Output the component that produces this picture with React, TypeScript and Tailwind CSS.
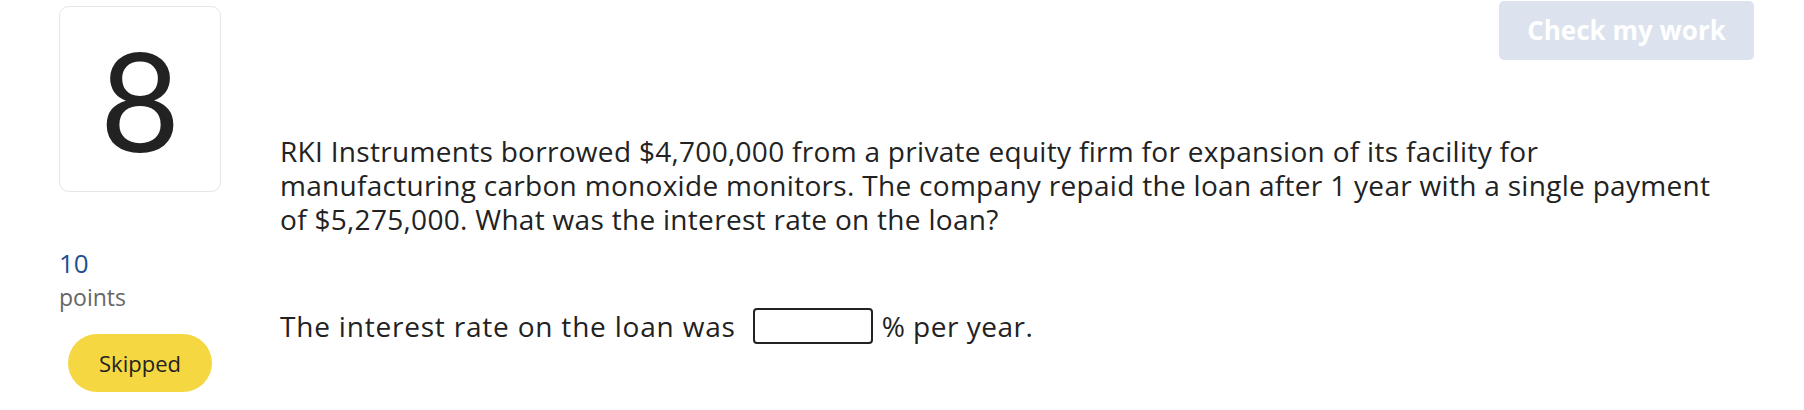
import React from "react";

export default function App() {
  return (
    <div className="w-[1804px] h-[410px] bg-white flex overflow-hidden" style={{ fontFamily: "'Open Sans', Lato, sans-serif" }}>
      <div className="w-[280px] shrink-0 pl-[59px] pt-[6px] flex flex-col">
        <div className="w-[162px] h-[186px] rounded-[10px] border border-[#e6e6e6] flex items-center justify-center">
          <span className="text-[138px] leading-none text-[#222] font-normal" style={{ fontFamily: "Lato, sans-serif" }}>8</span>
        </div>
        <div className="mt-[56px] text-[26px] leading-[30px] text-[#1f4f8f]">10</div>
        <div className="mt-[5px] text-[23px] leading-[28px] text-[#666]">points</div>
        <div className="mt-[23px] ml-[9px] w-[144px] h-[58px] rounded-full bg-[#f5d742] flex items-center justify-center text-[22px] text-[#222]">
          Skipped
        </div>
      </div>
      <div className="flex-1 pt-[1px] flex flex-col">
        <div className="flex justify-end pr-[50px]">
          <button className="w-[255px] h-[59px] rounded-[5px] bg-[#dce3ef] text-white font-bold text-[26px]">
            Check my work
          </button>
        </div>
        <p className="mt-[74px] w-[1500px] text-[28px] leading-[34px] tracking-[0.3px] text-[#222]">
          RKI Instruments borrowed $4,700,000 from a private equity firm for expansion of its facility for
          <br />
          manufacturing carbon monoxide monitors. The company repaid the loan after 1 year with a single payment
          <br />
          of $5,275,000. What was the interest rate on the loan?
        </p>
        <div className="mt-[72px] flex items-center text-[28px] leading-[34px] text-[#222]">
          <span className="tracking-[0.8px]">The interest rate on the loan was</span>
          <span className="ml-[17px] w-[120px] h-[36px] rounded-[4px] border-2 border-[#222] inline-block"></span>
          <span className="ml-[9px] tracking-[0.5px]">% per year.</span>
        </div>
      </div>
    </div>
  );
}
